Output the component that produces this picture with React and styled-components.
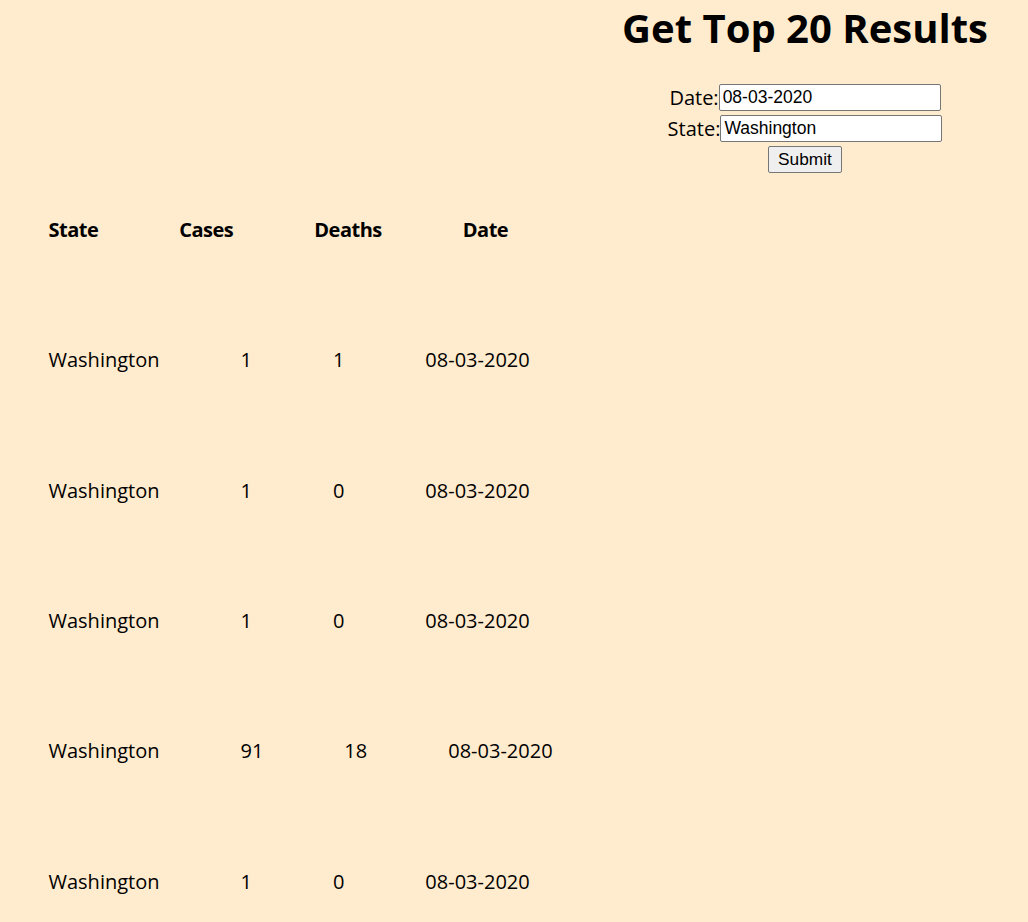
import React from "react";
import styled, { createGlobalStyle } from "styled-components";

const rows = [
  { state: "Washington", cases: 1, deaths: 1, date: "08-03-2020" },
  { state: "Washington", cases: 1, deaths: 0, date: "08-03-2020" },
  { state: "Washington", cases: 1, deaths: 0, date: "08-03-2020" },
  { state: "Washington", cases: 91, deaths: 18, date: "08-03-2020" },
  { state: "Washington", cases: 1, deaths: 0, date: "08-03-2020" },
];

function App() {
  return (
    <>
      <GlobalStyle />
      <Page>
        <Header>
          <Panel>
            <Title>Get Top 20 Results</Title>
            <Form onSubmit={(e) => e.preventDefault()}>
              <Field>
                <Label>Date:</Label>
                <Input defaultValue="08-03-2020" />
              </Field>
              <Field>
                <Label>State:</Label>
                <Input defaultValue="Washington" />
              </Field>
              <Submit type="submit">Submit</Submit>
            </Form>
          </Panel>
        </Header>

        <Table>
          <Row>
            <Cell $head>State</Cell>
            <Cell $head>Cases</Cell>
            <Cell $head>Deaths</Cell>
            <Cell $head>Date</Cell>
          </Row>
          {rows.map((r, i) => (
            <Row key={i}>
              <Cell>{r.state}</Cell>
              <Cell>{r.cases}</Cell>
              <Cell>{r.deaths}</Cell>
              <Cell>{r.date}</Cell>
            </Row>
          ))}
        </Table>
      </Page>
    </>
  );
}
export default App;

const GlobalStyle = createGlobalStyle`
  html, body {
    margin: 0;
    background: #ffebcd;
  }
  body {
    font-family: "Open Sans", "Noto Sans", sans-serif;
    color: #000;
  }
`;

const Page = styled.div`
  min-height: 922px;
  padding: 0 8px;
  overflow: hidden;
`;

const Header = styled.div`
  display: flex;
  justify-content: flex-end;
`;

const Panel = styled.div`
  width: 430px;
  text-align: center;
`;

const Title = styled.h1`
  margin: 0;
  font-size: 40px;
  line-height: normal;
  font-weight: 700;
`;

const Form = styled.form`
  margin-top: 28.5px;
  display: flex;
  flex-direction: column;
  align-items: center;
  gap: 4px;
`;

const Field = styled.div`
  display: flex;
  align-items: center;
`;

const Label = styled.label`
  font-size: 20px;
  line-height: 27px;
`;

const Input = styled.input`
  box-sizing: border-box;
  width: 222px;
  height: 27px;
  padding: 1px 3px;
  border: 1px solid #767676;
  border-radius: 2px;
  background: #fff;
  font-family: "Liberation Sans", Arial, sans-serif;
  font-size: 17.5px;
  color: #000;
`;

const Submit = styled.button`
  box-sizing: border-box;
  height: 27px;
  padding: 1px 9px;
  border: 1px solid #767676;
  border-radius: 2px;
  background: #efefef;
  font-family: "Liberation Sans", Arial, sans-serif;
  font-size: 17.3px;
  color: #000;
`;

const Table = styled.div`
  margin-top: 43.5px;
`;

const Row = styled.div`
  display: flex;
  height: 130.33px;
`;

const Cell = styled.div`
  padding: 0 40.5px;
  font-size: 20px;
  line-height: 28px;
  font-weight: ${(p) => (p.$head ? 700 : 400)};
  letter-spacing: ${(p) => (p.$head ? "-0.5px" : "0")};
  white-space: nowrap;
`;
